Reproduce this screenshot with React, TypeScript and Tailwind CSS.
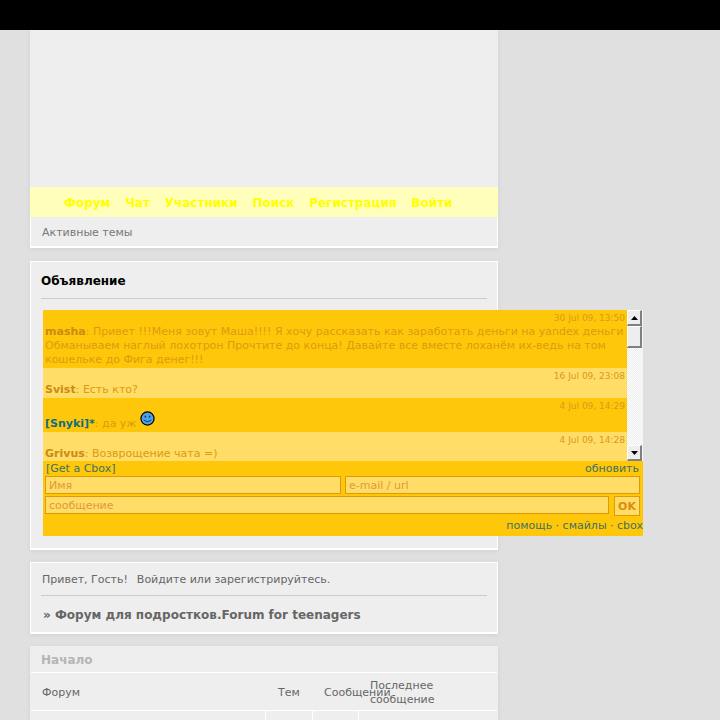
const messages = [
  {
    date: "30 Jul 09, 13:50",
    name: "masha",
    text: "Привет !!!Меня зовут Маша!!!! Я хочу рассказать как заработать деньги на yandex деньги Обманываем наглый лохотрон Прочтите до конца! Давайте все вместе лоханём их-ведь на том кошельке до Фига денег!!!",
    dark: true,
  },
  { date: "16 Jul 09, 23:08", name: "Svist", text: "Есть кто?", dark: false },
  { date: "4 Jul 09, 14:29", name: "[Snyki]*", text: "да уж", dark: true, mod: true },
  { date: "4 Jul 09, 14:28", name: "Grivus", text: "Возврощение чата =)", dark: false },
];

const navItems = ["Форум", "Чат", "Участники", "Поиск", "Регистрация", "Войти"];

function Smiley() {
  return (
    <svg width="15" height="15" viewBox="0 0 16 16" className="inline-block ml-[4px] -mt-[1.5px] relative -top-px align-baseline">
      <circle cx="8" cy="8" r="7" fill="#4ea3e8" stroke="#000" strokeWidth="1.3" />
      <rect x="5" y="5" width="1.5" height="2" fill="#04306a" />
      <rect x="9.5" y="5" width="1.5" height="2" fill="#04306a" />
      <path d="M4 9.5 Q8 13 12 9.5" fill="none" stroke="#04306a" strokeWidth="1" />
    </svg>
  );
}

function ScrollArrow({ up }: { up?: boolean }) {
  return (
    <div className="h-[16px] w-[15px] flex items-center justify-center bg-[#eeeeee] border-t border-l border-t-white border-l-white border-r-2 border-b-2 border-r-[#808080] border-b-[#808080]">
      <svg width="7" height="4" viewBox="0 0 7 4">
        <path d={up ? "M0 4 L3.5 0 L7 4 Z" : "M0 0 L7 0 L3.5 4 Z"} fill="#000" />
      </svg>
    </div>
  );
}

function Chat() {
  return (
    <div className="w-[600px] bg-[#ffc709] relative z-10 text-[11px] leading-[14px]">
      <div className="flex h-[151px] overflow-hidden">
        <div className="w-[584px] shrink-0 overflow-hidden">
          {messages.map((m) => (
            <div key={m.date} className={`px-[2px] pt-px pb-px ${m.dark ? "bg-[#ffc709]" : "bg-[#ffdd66]"}`}>
              <div className="text-right text-[9px] leading-[14px] text-[#d99a1c]">{m.date}</div>
              <div className="text-[#dd9a10]">
                <b className={m.mod ? "text-[#0f6e83]" : "text-[#cc8a14]"}>{m.name}</b>: {m.text}
                {m.mod && <Smiley />}
              </div>
            </div>
          ))}
        </div>
        <div className="w-[16px] h-[151px] flex flex-col bg-[repeating-conic-gradient(#ffffff_0_25%,#ececec_0_50%)] bg-[length:2px_2px]">
          <ScrollArrow up />
          <div className="h-[22px] w-[15px] bg-[#eeeeee] border-t border-l border-t-white border-l-white border-r-2 border-b-2 border-r-[#808080] border-b-[#808080]" />
          <div className="flex-1" />
          <ScrollArrow />
        </div>
      </div>
      <div className="flex justify-between pl-[3px] pr-[4px] h-[15px] leading-[15px] text-[#3d7265]">
        <span>[Get a Cbox]</span>
        <span>обновить</span>
      </div>
      <div className="flex justify-between pl-[2px] pr-[3px]">
        <input
          placeholder="Имя"
          className="w-[296px] h-[18px] bg-[#ffdd66] border border-[#dd9a10] px-[3px] text-[11px] placeholder:text-[#dd9a40] outline-none"
        />
        <input
          placeholder="e-mail / url"
          className="w-[295px] h-[18px] bg-[#ffdd66] border border-[#dd9a10] px-[3px] text-[11px] placeholder:text-[#dd9a40] outline-none"
        />
      </div>
      <div className="flex justify-between pl-[2px] pr-[3px] mt-[2px]">
        <input
          placeholder="сообщение"
          className="w-[564px] h-[18px] bg-[#ffdd66] border border-[#dd9a10] px-[3px] text-[11px] placeholder:text-[#dd9a40] outline-none"
        />
        <div className="w-[26px] h-[20px] bg-[#ffdd66] border border-[#dd9a10] text-[#dd8a10] font-bold text-center leading-[19px]">
          OK
        </div>
      </div>
      <div className="text-right h-[20px] leading-[19px] text-[#3d7265] whitespace-nowrap">
        помощь · смайлы · cbox
      </div>
    </div>
  );
}

export default function App() {
  return (
    <div className="h-[720px] overflow-hidden bg-[#e0e0e0] font-['DejaVu_Sans',sans-serif]">
      <div className="h-[30px] bg-black relative z-10" />
      <div className="w-[468px] ml-[30px]">
        <div className="h-[218px] bg-[#eeeeee] border-b-2 border-white shadow-[0_1px_4px_#d0d0d0]">
          <div className="h-[157px]" />
          <div className="h-[30px] bg-[#ffffbb] pl-[34px] pt-px flex items-center gap-[14.8px] text-[12px] font-bold text-[#ffff00]">
            {navItems.map((n) => (
              <span key={n}>{n}</span>
            ))}
          </div>
          <div className="h-[29px] border-x border-white pl-[11px] pt-[9px] text-[11px] leading-[14px] text-[#777777]">Активные темы</div>
        </div>

        <div className="mt-[13px] h-[289px] bg-[#eeeeee] border border-white border-b-2 shadow-[0_1px_4px_#d0d0d0] pt-[12px] px-[10px]">
          <div className="text-[12px] leading-[15px] font-bold text-black">Объявление</div>
          <div className="h-px bg-[#cccccc] mt-[9px]" />
          <div className="mt-[11px] ml-[2px]">
            <Chat />
          </div>
        </div>

        <div className="mt-[12px] h-[72px] bg-[#eeeeee] border border-white border-b-2 shadow-[0_1px_4px_#d0d0d0] px-[10px] pt-[10px]">
          <div className="pl-px text-[11px] leading-[14px] text-[#666666]">
            Привет, Гость!<span className="ml-[9px]">Войдите или зарегистрируйтесь.</span>
          </div>
          <div className="h-px bg-[#cccccc] mt-[8px]" />
          <div className="pl-[2px] mt-[12px] text-[12px] leading-[15px] font-bold text-[#666666]">» Форум для подростков.Forum for teenagers</div>
        </div>

        <div className="mt-[12px] bg-[#eeeeee] h-[80px] shadow-[0_1px_4px_#d0d0d0]">
          <div className="h-[26px] pl-[11px] text-[12px] leading-[29px] font-bold text-[#b5b5b5]">Начало</div>
          <div className="mx-px h-[38px] border-t border-white flex text-[11px] text-[#666666] relative">
            <div className="w-[236px] pl-[11px] leading-[39px]">Форум</div>
            <div className="w-[46px] pl-[11px] leading-[39px]">Тем</div>
            <div className="w-[46px] pl-[11px] leading-[39px] whitespace-nowrap">Сообщений</div>
            <div className="w-[120px] pl-[11px] pt-[6px] leading-[14px] relative z-10">Последнее сообщение</div>
          </div>
          <div className="mx-px h-[14px] border-t border-white flex">
            <div className="w-[235px] border-r border-white" />
            <div className="w-[47px] border-r border-white" />
            <div className="w-[46px] border-r border-white" />
          </div>
        </div>
      </div>
    </div>
  );
}
